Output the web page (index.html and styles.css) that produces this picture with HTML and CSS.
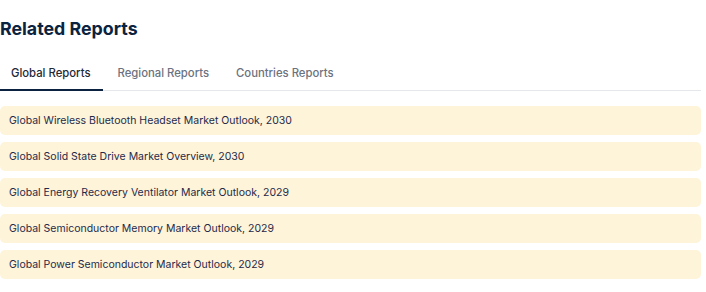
FILE: index.html
```html
<!DOCTYPE html>
<html lang="en">
<head>
    <meta charset="UTF-8">
    <meta name="viewport" content="width=device-width, initial-scale=1.0">
    <title>Related Reports</title>
    <link rel="stylesheet" href="styles.css">
</head>
<body>
    <section class="related">
        <h2 class="related-title">Related Reports</h2>
        <nav class="tabs">
            <a class="tab active" href="#">Global Reports</a>
            <a class="tab" href="#">Regional Reports</a>
            <a class="tab" href="#">Countries Reports</a>
        </nav>
        <ul class="report-list">
            <li class="report-item"><a href="#">Global Wireless Bluetooth Headset Market Outlook, 2030</a></li>
            <li class="report-item"><a href="#">Global Solid State Drive Market Overview, 2030</a></li>
            <li class="report-item"><a href="#">Global Energy Recovery Ventilator Market Outlook, 2029</a></li>
            <li class="report-item"><a href="#">Global Semiconductor Memory Market Outlook, 2029</a></li>
            <li class="report-item"><a href="#">Global Power Semiconductor Market Outlook, 2029</a></li>
        </ul>
    </section>
</body>
</html>
```

FILE: styles.css
```css
body {
    font-family: Inter, "Noto Sans", sans-serif;
    background-color: #fff;
    margin: 0;
    padding: 0;
}
.related {
    width: 701px;
}
.related-title {
    margin: 17px 0 0;
    font-size: 17.8px;
    line-height: 24px;
    font-weight: 700;
    color: #0b2340;
}
.tabs {
    display: flex;
    margin-top: 14px;
    border-bottom: 1px solid #e6e7ea;
}
.tab {
    padding: 10px 13px 8px 11px;
    font-size: 11.3px;
    line-height: 16px;
    font-weight: 500;
    color: #6b7280;
    text-decoration: none;
    border-bottom: 2px solid transparent;
    margin-bottom: -1px;
}
.tab + .tab {
    margin-left: 3px;
}
.tab.active {
    color: #1f2937;
    border-bottom-color: #0b2340;
}
.report-list {
    list-style: none;
    margin: 15px 0 0;
    padding: 0;
}
.report-item {
    height: 29px;
    display: flex;
    align-items: center;
    padding: 0 9px;
    margin-bottom: 7px;
    background-color: #fef4d9;
    border-radius: 5px;
}
.report-item a {
    font-size: 10.5px;
    color: #1e2a4a;
    text-decoration: none;
}
```
